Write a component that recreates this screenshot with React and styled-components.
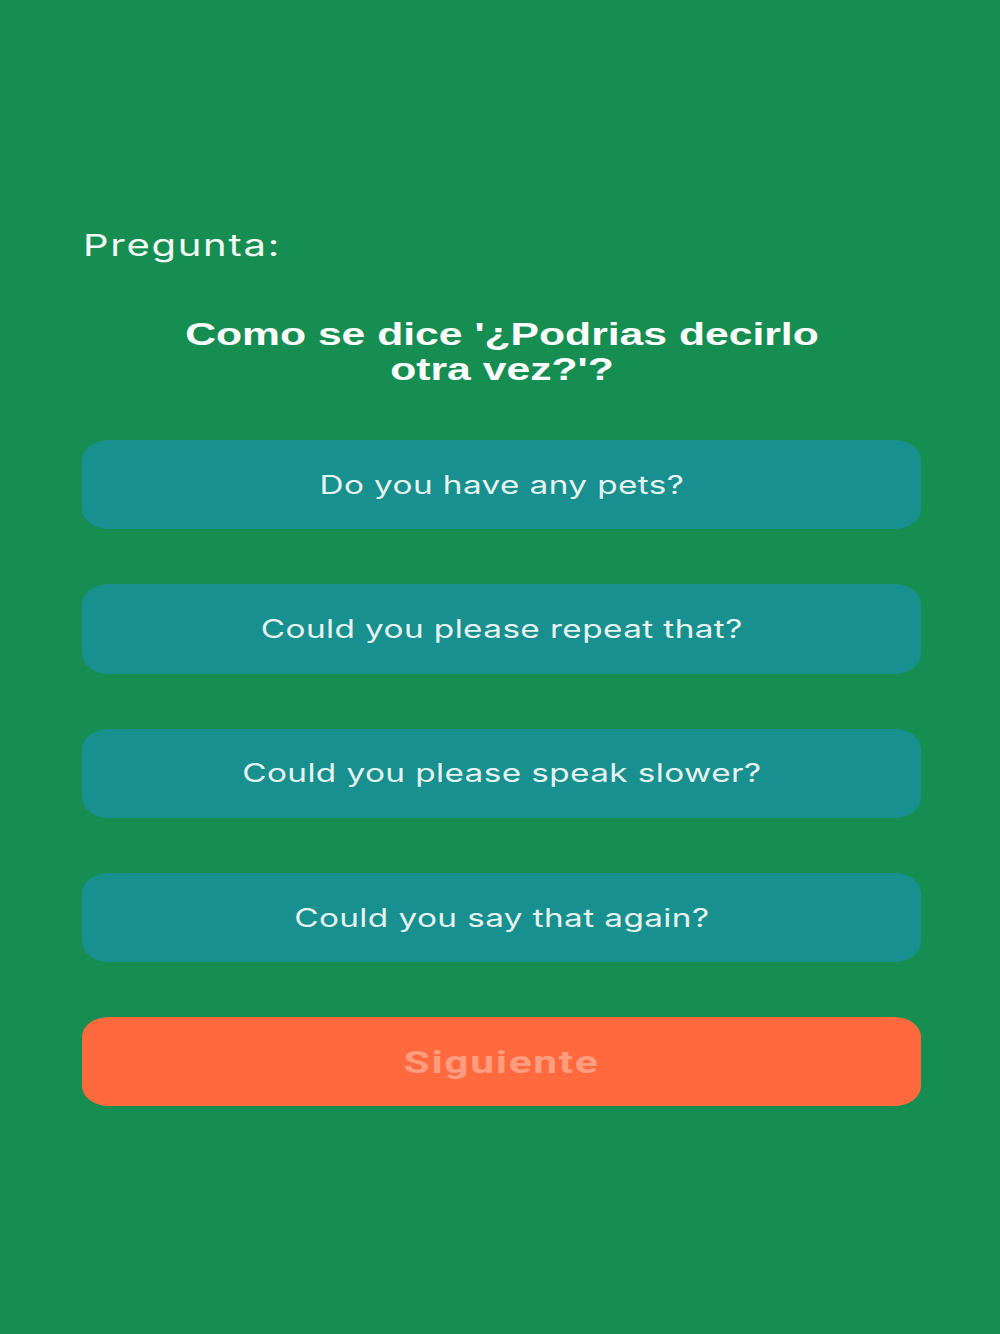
import React, { useState } from 'react';
import styled, { createGlobalStyle, css } from 'styled-components';

const GlobalStyle = createGlobalStyle`
  html, body {
    margin: 0;
    padding: 0;
    background: #168e52;
  }
  body {
    font-family: Inter, "Liberation Sans", sans-serif;
    -webkit-font-smoothing: antialiased;
  }
`;

// the phone capture is stretched sideways, so glyphs get widened too
const Stretch = styled.span`
  display: inline-block;
  transform: scaleX(1.333);
  transform-origin: ${props => (props.left ? 'left center' : 'center center')};
  white-space: ${props => (props.wrap ? 'normal' : 'nowrap')};
  max-width: ${props => (props.wrap ? '500px' : 'none')};
`;

const Screen = styled.div`
  min-height: 1334px;
  background: #168e52;
  display: flex;
  flex-direction: column;
  padding: 228px 79px 0 82px;
  box-sizing: border-box;
`;

const Label = styled.div`
  font-family: Inter, sans-serif;
  font-weight: 400;
  font-size: 30px;
  line-height: 34px;
  letter-spacing: 1.3px;
  color: #f4faf6;
  margin-left: 1px;
`;

const Question = styled.div`
  margin-top: 55px;
  font-family: "Liberation Sans", Arial, sans-serif;
  font-weight: 700;
  font-size: 32px;
  line-height: 35px;
  color: #ffffff;
  text-align: center;
`;

const Options = styled.div`
  margin-top: 53px;
  display: flex;
  flex-direction: column;
  gap: 55px;
`;

const Option = styled.button`
  height: 89.3px;
  border: none;
  border-radius: 27px / 20px;
  background: #17908f;
  color: #e6f3ef;
  font-family: Inter, sans-serif;
  font-size: 25px;
  font-weight: 400;
  letter-spacing: 0.3px;
  display: flex;
  align-items: center;
  justify-content: center;
  cursor: pointer;
  padding: 0;
  ${props =>
    props.picked &&
    css`
      background: #1aa3a1;
    `}
`;

const NextButton = styled.button`
  height: 89.3px;
  border: none;
  border-radius: 27px / 20px;
  background: #fe693d;
  color: #ff9d7e;
  font-family: Roboto, sans-serif;
  font-size: 32px;
  font-weight: 700;
  letter-spacing: 1.2px;
  display: flex;
  align-items: center;
  justify-content: center;
  padding: 0;
  ${props =>
    props.ready &&
    css`
      color: #ffffff;
    `}
`;

const answers = [
  'Do you have any pets?',
  'Could you please repeat that?',
  'Could you please speak slower?',
  'Could you say that again?',
];

function App() {
  const [picked, setPicked] = useState(null);

  return (
    <Screen>
      <GlobalStyle />
      <Label>
        <Stretch left>Pregunta:</Stretch>
      </Label>
      <Question>
        <Stretch wrap>Como se dice '¿Podrias decirlo otra vez?'?</Stretch>
      </Question>
      <Options>
        {answers.map((a, i) => (
          <Option key={a} picked={picked === i} onClick={() => setPicked(i)}>
            <Stretch>{a}</Stretch>
          </Option>
        ))}
        <NextButton ready={picked !== null}>
          <Stretch>Siguiente</Stretch>
        </NextButton>
      </Options>
    </Screen>
  );
}

export default App;
